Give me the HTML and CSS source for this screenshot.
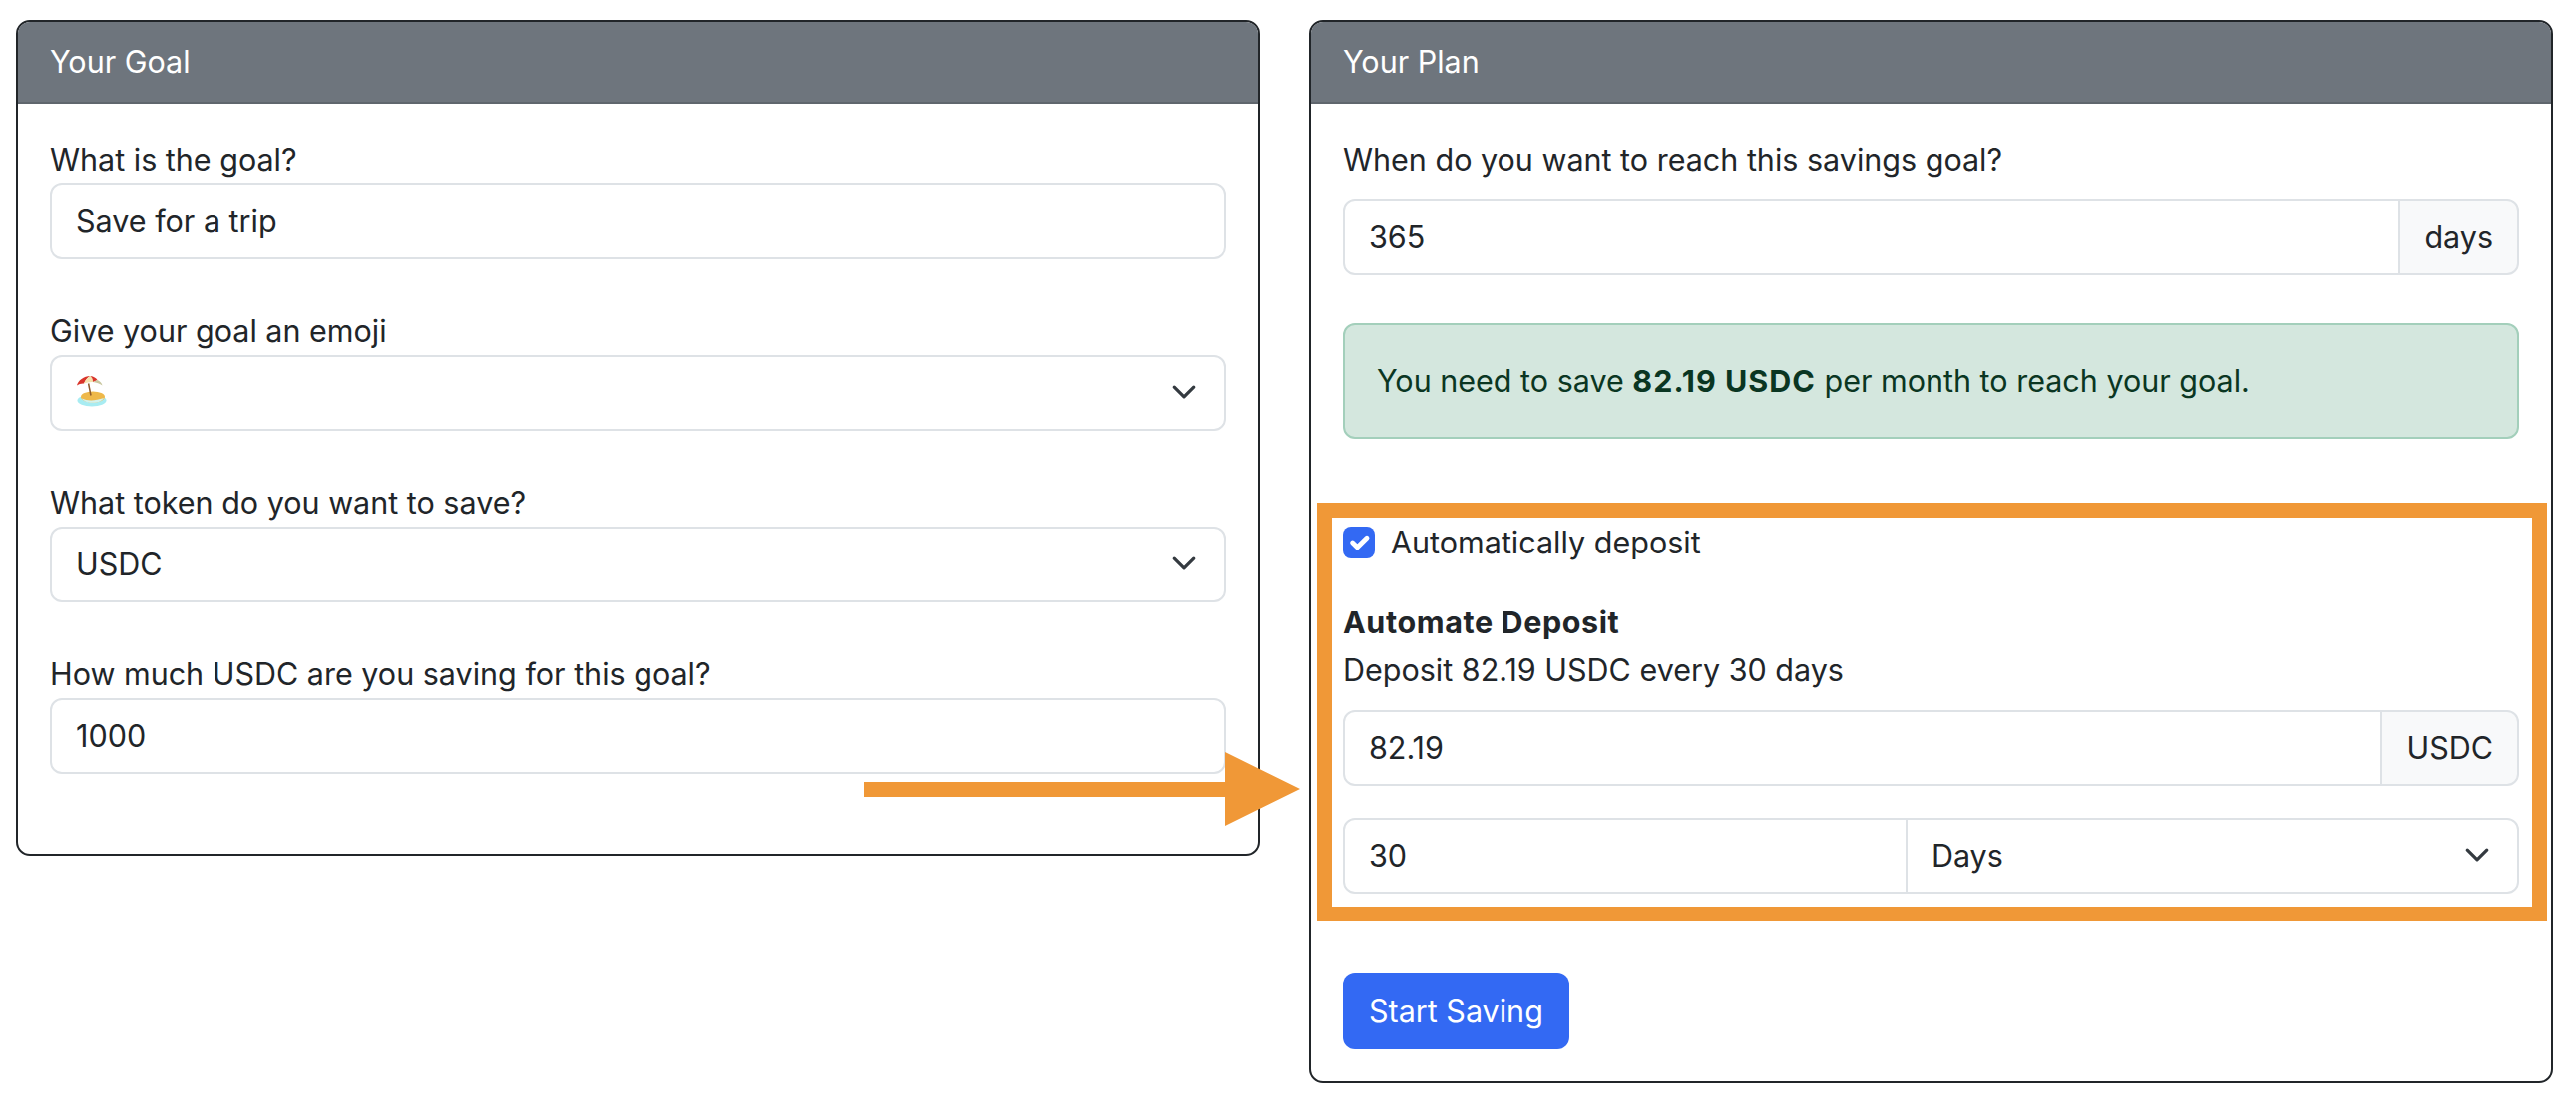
FILE: index.html
```html
<!DOCTYPE html>
<html lang="en">
<head>
  <meta charset="UTF-8">
  <title>Your Goal</title>
  <link rel="stylesheet" href="styles.css">
</head>
<body>

  <div class="page">
    <section class="card">
      <div class="card-header">Your Goal</div>
      <div class="card-body">
        <div class="field">
          <div class="form-label">What is the goal?</div>
          <div class="form-control">Save for a trip</div>
        </div>
        <div class="field">
          <div class="form-label">Give your goal an emoji</div>
          <div class="form-control form-select">
            <svg class="emoji" viewBox="0 0 32 32" role="img" aria-label="beach with umbrella">
              <ellipse cx="16" cy="25.5" rx="14.5" ry="6" fill="#a8ecf2"/>
              <ellipse cx="17" cy="22" rx="12" ry="5.5" fill="#eeb84a"/>
              <path d="M6 23.5c5 2.6 13 2.8 22-.5-2 3.5-7 5-12 4.8-4-.1-8.500-1.500-10-4.300z" fill="#d4f2ee"/>
              <path d="M12.600 8.500 15 20.500" stroke="#8d5a2b" stroke-width="1.500" fill="none"/>
              <path d="M1 10.500C2 5.500 8 1 14.500 1c-3 1.500-5 4-6.500 7.500-2.500-.2-5 .5-7 2z" fill="#d9352b"/>
              <path d="M8 8.500C9.500 5 11.500 2.500 14.500 1c2 2 2.500 3.500 2.500 6-3-.2-6 .4-9 1.500z" fill="#f5e3ae"/>
              <path d="M17 7c0-2.500-.5-4-2.500-6 3.500.5 5.500 2 7 4-1.500.5-3 1.200-4.500 2z" fill="#d9352b"/>
              <path d="M21.500 5c2.500 1 4.500 3 5 5.500-2.500-1.700-6-3.300-9.500-3.500 1.500-.8 3-1.500 4.500-2z" fill="#c9c7a0"/>
            </svg>
            <svg class="chevron" viewBox="0 0 16 16"><path d="m2 5 6 6 6-6"/></svg>
          </div>
        </div>
        <div class="field">
          <div class="form-label">What token do you want to save?</div>
          <div class="form-control form-select">
            USDC
            <svg class="chevron" viewBox="0 0 16 16"><path d="m2 5 6 6 6-6"/></svg>
          </div>
        </div>
        <div class="field">
          <div class="form-label">How much USDC are you saving for this goal?</div>
          <div class="form-control">1000</div>
        </div>
      </div>
    </section>

    <section class="card card-plan">
      <div class="card-header">Your Plan</div>
      <div class="card-body">
        <div class="field">
          <div class="form-label label-spaced">When do you want to reach this savings goal?</div>
          <div class="input-group">
            <div class="form-control">365</div>
            <div class="input-addon">days</div>
          </div>
        </div>

        <div class="alert">You need to save <strong>82.19 USDC</strong> per month to reach your goal.</div>

        <div class="deposit">
          <div class="form-check">
            <span class="checkbox">
              <svg viewBox="0 0 20 20"><path d="m6 10 3 3 6-6"/></svg>
            </span>
            Automatically deposit
          </div>
          <div class="deposit-title">Automate Deposit</div>
          <div class="deposit-text">Deposit 82.19 USDC every 30 days</div>
          <div class="input-group">
            <div class="form-control">82.19</div>
            <div class="input-addon">USDC</div>
          </div>
          <div class="input-group split">
            <div class="form-control">30</div>
            <div class="form-control form-select">
              Days
              <svg class="chevron" viewBox="0 0 16 16"><path d="m2 5 6 6 6-6"/></svg>
            </div>
          </div>
        </div>

        <div class="btn">Start Saving</div>
      </div>
    </section>

    <svg class="arrow" viewBox="0 0 437 74"><path d="M0 30h362V0l75 37-75 37V45H0z"/></svg>
  </div>

</body>
</html>
```

FILE: styles.css
```css
:root {
  --cor-texto: #212529;
  --cor-borda: #dee2e6;
  --cor-laranja: #f09837;
  --cor-azul: #3369f3;
}

body {
  font-family: Inter, "Noto Sans", sans-serif;
  font-size: 30.5px;
  line-height: 48px;
  color: var(--cor-texto);
  background-color: #fff;
  margin: 0;
}

.page {
  position: relative;
  display: grid;
  grid-template-columns: 1fr 1fr;
  gap: 49px;
  align-items: start;
  padding: 20px 23px 0 16px;
}

.card {
  border: 2px solid var(--cor-texto);
  border-radius: 14px;
  overflow: hidden;
}

.card-header {
  background-color: #6e757d;
  border-bottom: 2px solid #5f666d;
  color: #fff;
  padding: 16px 32px;
}

.card-body {
  padding: 32px;
}

.field {
  margin-bottom: 48px;
}

.label-spaced {
  margin-bottom: 16px;
}

.form-control {
  position: relative;
  box-sizing: border-box;
  height: 76px;
  padding: 12px 24px;
  border: 2px solid var(--cor-borda);
  border-radius: 12px;
  background-color: #fff;
}

.chevron {
  position: absolute;
  right: 27px;
  top: 22px;
  width: 26px;
  height: 26px;
}

.chevron path {
  fill: none;
  stroke: #343a40;
  stroke-width: 2;
  stroke-linecap: round;
  stroke-linejoin: round;
}

.emoji {
  display: block;
  width: 32px;
  height: 32px;
  margin-top: 6px;
}

.input-group {
  display: flex;
}

.input-group .form-control {
  flex: 1;
  border-top-right-radius: 0;
  border-bottom-right-radius: 0;
}

.input-addon {
  box-sizing: border-box;
  height: 76px;
  padding: 12px 24px;
  margin-left: -2px;
  border: 2px solid var(--cor-borda);
  border-radius: 0 12px 12px 0;
  background-color: #f8f9fa;
}

.input-group.split {
  display: grid;
  grid-template-columns: 48% 52%;
  margin-top: 32px;
}

.input-group.split .form-select {
  margin-left: -2px;
  border-radius: 0 12px 12px 0;
}

.alert {
  box-sizing: border-box;
  height: 116px;
  padding: 32px;
  margin-bottom: 80px;
  border: 2px solid #a3cfbb;
  border-radius: 12px;
  background-color: #d4e7de;
  color: #0a3622;
}

.alert strong {
  letter-spacing: 1px;
}

.deposit {
  position: relative;
  margin-bottom: 80px;
}

/* caixa laranja em volta da parte nova */
.deposit::after {
  content: "";
  position: absolute;
  top: -16px;
  left: -26px;
  right: -28px;
  bottom: -28px;
  border: 15px solid var(--cor-laranja);
  pointer-events: none;
}

.form-check {
  display: flex;
  align-items: center;
  gap: 16px;
  margin-bottom: 32px;
}

.checkbox {
  display: block;
  width: 32px;
  height: 32px;
  border-radius: 8px;
  background-color: var(--cor-azul);
}

.checkbox svg {
  display: block;
}

.checkbox path {
  fill: none;
  stroke: #fff;
  stroke-width: 3;
  stroke-linecap: round;
  stroke-linejoin: round;
}

.deposit-title {
  font-weight: 700;
  letter-spacing: .6px;
}

.deposit-text {
  margin-bottom: 16px;
}

.btn {
  display: inline-block;
  padding: 14px 26px;
  border-radius: 12px;
  background-color: var(--cor-azul);
  color: #fff;
}

.arrow {
  position: absolute;
  left: 866px;
  top: 754px;
  width: 437px;
  height: 74px;
  fill: var(--cor-laranja);
}
```
